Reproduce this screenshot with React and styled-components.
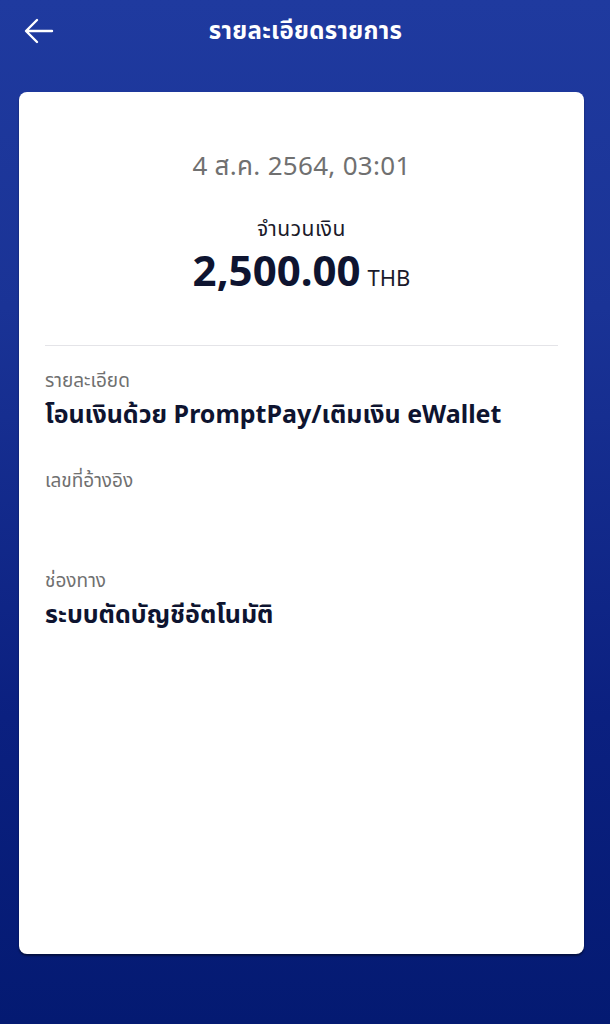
import React from "react";
import styled, { createGlobalStyle } from "styled-components";

const GlobalStyle = createGlobalStyle`
  html, body {
    margin: 0;
    padding: 0;
  }
  body {
    font-family: "Noto Sans", "Noto Sans Thai", "Liberation Sans", sans-serif;
  }
`;

const Screen = styled.div`
  width: 610px;
  height: 1024px;
  box-sizing: border-box;
  background: linear-gradient(180deg, #1f3a9f 0%, #1a3396 30%, #0b2080 70%, #041a72 100%);
  display: flex;
  flex-direction: column;
  padding: 0 26px 70px 19px;
`;

const Header = styled.div`
  height: 62px;
  display: flex;
  align-items: center;
  position: relative;
  margin-bottom: 30px;
`;

const BackButton = styled.button`
  background: none;
  border: none;
  padding: 0;
  margin-left: 5px;
  width: 32px;
  height: 32px;
  display: flex;
  align-items: center;
  cursor: pointer;
`;

const Title = styled.h1`
  position: absolute;
  left: 0;
  right: 0;
  margin: 0;
  text-align: center;
  color: #fff;
  font-size: 24px;
  font-weight: 700;
  letter-spacing: 0.3px;
  pointer-events: none;
  padding-left: 8px;
`;

const Card = styled.div`
  flex: 1;
  background: #fff;
  border-radius: 8px;
  box-shadow: 0 2px 2px rgba(0, 0, 0, 0.45);
  padding: 0 26px;
  display: flex;
  flex-direction: column;
`;

const Summary = styled.div`
  display: flex;
  flex-direction: column;
  align-items: center;
  padding-top: 55px;
  padding-bottom: 43px;
  border-bottom: 1px solid #e4e4e8;
`;

const DateText = styled.div`
  color: #707070;
  font-size: 26px;
  line-height: 36px;
  letter-spacing: 0.3px;
`;

const AmountLabel = styled.div`
  margin-top: 30px;
  color: #1a1a2a;
  font-size: 21px;
  line-height: 30px;
  letter-spacing: 0.5px;
`;

const Amount = styled.div`
  margin-top: 2px;
  display: flex;
  align-items: baseline;
  gap: 7px;
  color: #0e1430;
  line-height: 50px;
`;

const Value = styled.span`
  font-size: 42px;
  font-weight: 700;
`;

const Currency = styled.span`
  font-size: 22px;
  color: #1a1a2a;
`;

const Field = styled.div`
  display: flex;
  flex-direction: column;
  padding-top: ${(p) => p.$top}px;
`;

const FieldLabel = styled.div`
  color: #707070;
  font-size: 19px;
  line-height: 28px;
`;

const FieldValue = styled.div`
  margin-top: 1px;
  color: #0e1430;
  font-size: 25px;
  font-weight: 700;
  line-height: 36px;
  min-height: 36px;
`;

const fields = [
  { label: "รายละเอียด", value: "โอนเงินด้วย PromptPay/เติมเงิน eWallet", top: 20 },
  { label: "เลขที่อ้างอิง", value: "", top: 35 },
  { label: "ช่องทาง", value: "ระบบตัดบัญชีอัตโนมัติ", top: 35 },
];

export default function App() {
  return (
    <>
      <GlobalStyle />
      <Screen>
        <Header>
          <BackButton aria-label="back">
            <svg width="30" height="26" viewBox="0 0 30 26" fill="none">
              <path
                d="M28 13H3M13 2L2 13l11 11"
                stroke="#fff"
                strokeWidth="2.4"
                strokeLinecap="round"
                strokeLinejoin="round"
              />
            </svg>
          </BackButton>
          <Title>รายละเอียดรายการ</Title>
        </Header>
        <Card>
          <Summary>
            <DateText>4 ส.ค. 2564, 03:01</DateText>
            <AmountLabel>จำนวนเงิน</AmountLabel>
            <Amount>
              <Value>2,500.00</Value>
              <Currency>THB</Currency>
            </Amount>
          </Summary>
          {fields.map((f) => (
            <Field key={f.label} $top={f.top}>
              <FieldLabel>{f.label}</FieldLabel>
              <FieldValue>{f.value}</FieldValue>
            </Field>
          ))}
        </Card>
      </Screen>
    </>
  );
}
